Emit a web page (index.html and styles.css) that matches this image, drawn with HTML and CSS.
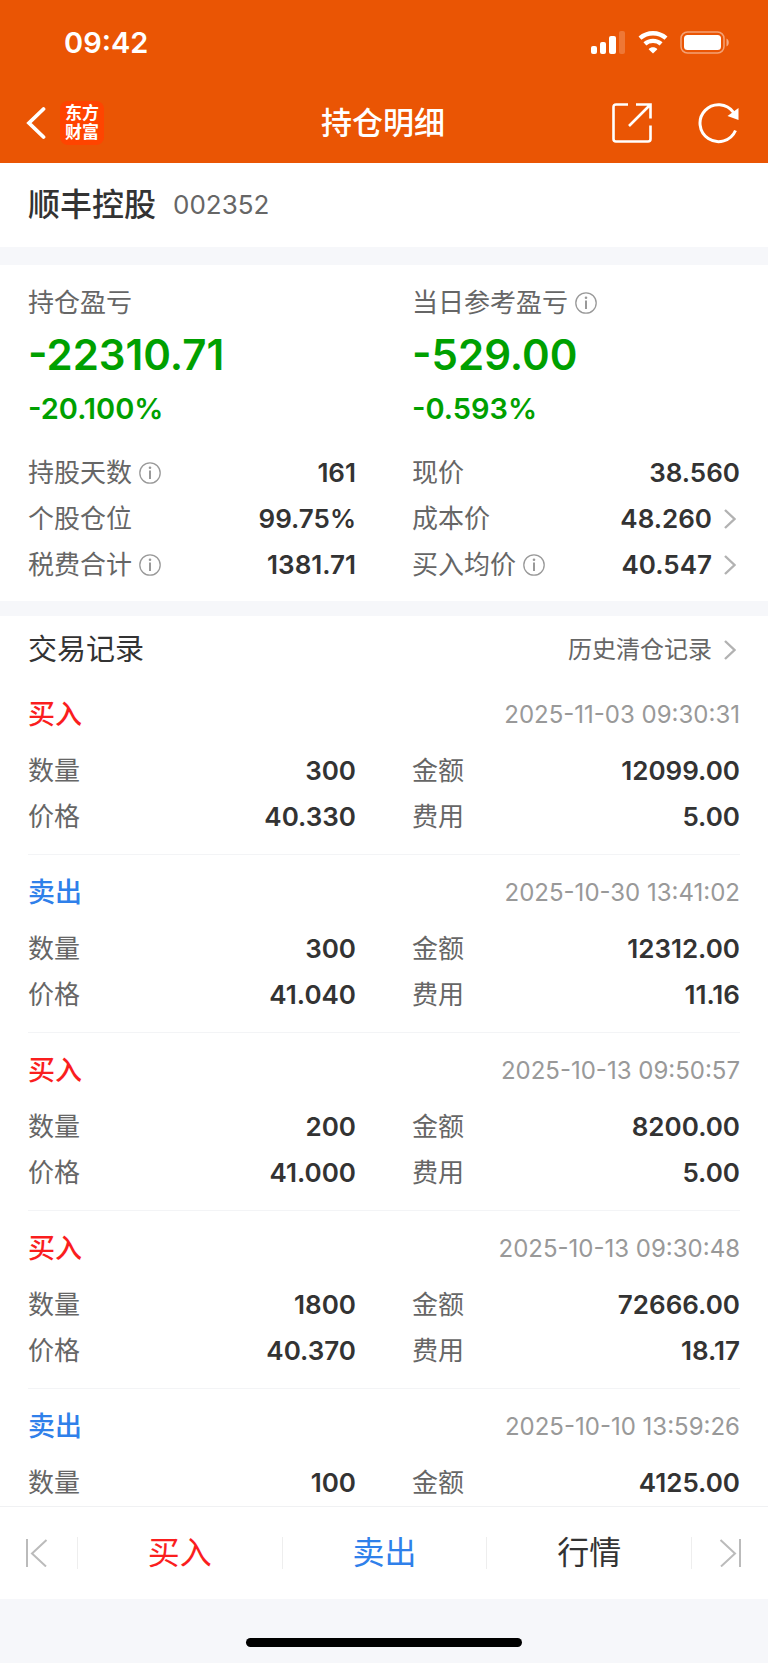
FILE: index.html
```html
<!DOCTYPE html>
<html lang="zh-CN">
<head>
    <meta charset="UTF-8">
    <meta name="viewport" content="width=device-width, initial-scale=1.0">
    <title>持仓明细</title>
    <link rel="stylesheet" href="styles.css">
</head>
<body>
    <svg class="icon-defs" aria-hidden="true">
        <symbol id="icon-info" viewBox="0 0 22 22">
            <circle cx="11" cy="11" r="10.2" fill="none" stroke="currentColor" stroke-width="1.3"/>
            <circle cx="11" cy="5.8" r="1.3" fill="currentColor"/>
            <path d="M11 8.6V17" stroke="currentColor" stroke-width="2"/>
        </symbol>
        <symbol id="icon-arrow" viewBox="0 0 12 20">
            <path d="M1 1l9.5 9L1 19" fill="none" stroke="currentColor" stroke-width="2.4"/>
        </symbol>
    </svg>

    <div class="app">
        <header class="header">
            <!-- 状态栏 -->
            <div class="status-bar">
                <span class="status-time">09:42</span>
                <div class="status-icons">
                    <svg width="35" height="23" viewBox="0 0 35 23" fill="#fff">
                        <rect x="0" y="15" width="6" height="8" rx="2"/>
                        <rect x="9" y="11" width="6" height="12" rx="2"/>
                        <rect x="18" y="5" width="7" height="18" rx="2"/>
                        <rect x="28" y="0" width="6" height="23" rx="2" opacity="0.2"/>
                    </svg>
                    <svg width="30" height="23" viewBox="0 0 30 23" fill="none" stroke="#fff" stroke-width="4.4">
                        <path d="M2 7.2C9.5 0.6 20.5 0.6 28 7.2"/>
                        <path d="M6.9 12.9C11.5 8.9 18.5 8.9 23.1 12.9"/>
                        <path d="M15 22.6L10.6 18.2C13 15.7 17 15.7 19.4 18.2Z" fill="#fff" stroke="none"/>
                    </svg>
                    <svg width="50" height="23" viewBox="0 0 50 23" fill="#fff">
                        <rect x="1" y="1" width="43" height="21" rx="6.5" fill="none" stroke="#fff" stroke-width="1.5" opacity="0.45"/>
                        <rect x="4" y="4" width="37" height="15" rx="3.5"/>
                        <path d="M46.5 7.5C49.5 8.8 49.5 14.2 46.5 15.5Z" opacity="0.5"/>
                    </svg>
                </div>
            </div>

            <!-- 导航栏 -->
            <nav class="nav-bar">
                <div class="nav-left">
                    <button class="icon-btn" aria-label="返回">
                        <svg width="20" height="34" viewBox="0 0 20 34" fill="none" stroke="#fff" stroke-width="3.8" stroke-linecap="round">
                            <path d="M17.5 3L3 17L17.5 31"/>
                        </svg>
                    </button>
                    <a href="#" class="logo">东方<br>财富</a>
                </div>
                <h1 class="nav-title">持仓明细</h1>
                <div class="nav-right">
                    <button class="icon-btn" aria-label="分享">
                        <svg width="40" height="40" viewBox="0 0 40 40" fill="none" stroke="#fff" stroke-width="2.6">
                            <path d="M16 1.5H4Q1.5 1.5 1.5 4V36Q1.5 38.5 4 38.5H36Q38.5 38.5 38.5 36V22.5"/>
                            <path d="M24 1.5H38.5V15.5M38 2L17 23"/>
                        </svg>
                    </button>
                    <button class="icon-btn" aria-label="刷新">
                        <svg width="42" height="42" viewBox="0 0 42 42" fill="none" stroke="#fff" stroke-width="3">
                            <path d="M37.5 28.5A18.5 18.5 0 1 1 35.5 10.3"/>
                            <path d="M40.5 6V18L29.5 14Z" fill="#fff" stroke="none"/>
                        </svg>
                    </button>
                </div>
            </nav>
        </header>

        <main class="content">
            <section class="stock">
                <h2 class="stock-name">顺丰控股</h2>
                <span class="stock-code">002352</span>
            </section>

            <!-- 盈亏汇总 -->
            <section class="summary columns">
                <div class="summary-col">
                    <div class="label profit-label">持仓盈亏</div>
                    <div class="profit">-22310.71</div>
                    <div class="profit-rate">-20.100%</div>
                    <dl class="rows">
                        <div class="row">
                            <dt class="label">持股天数<button class="icon-btn info" aria-label="持股天数说明"><svg width="22" height="22"><use href="#icon-info"/></svg></button></dt>
                            <dd>161</dd>
                        </div>
                        <div class="row">
                            <dt class="label">个股仓位</dt>
                            <dd>99.75%</dd>
                        </div>
                        <div class="row">
                            <dt class="label">税费合计<button class="icon-btn info" aria-label="税费合计说明"><svg width="22" height="22"><use href="#icon-info"/></svg></button></dt>
                            <dd>1381.71</dd>
                        </div>
                    </dl>
                </div>
                <div class="summary-col">
                    <div class="label profit-label">当日参考盈亏<button class="icon-btn info" aria-label="当日参考盈亏说明"><svg width="22" height="22"><use href="#icon-info"/></svg></button></div>
                    <div class="profit">-529.00</div>
                    <div class="profit-rate">-0.593%</div>
                    <dl class="rows">
                        <div class="row">
                            <dt class="label">现价</dt>
                            <dd>38.560</dd>
                        </div>
                        <div class="row">
                            <dt class="label">成本价</dt>
                            <dd><a href="#" class="more">48.260<svg width="12" height="20"><use href="#icon-arrow"/></svg></a></dd>
                        </div>
                        <div class="row">
                            <dt class="label">买入均价<button class="icon-btn info" aria-label="买入均价说明"><svg width="22" height="22"><use href="#icon-info"/></svg></button></dt>
                            <dd><a href="#" class="more">40.547<svg width="12" height="20"><use href="#icon-arrow"/></svg></a></dd>
                        </div>
                    </dl>
                </div>
            </section>

            <!-- 交易记录 -->
            <section class="records">
                <div class="records-head">
                    <h2 class="records-title">交易记录</h2>
                    <a href="#" class="more history">历史清仓记录<svg width="12" height="20"><use href="#icon-arrow"/></svg></a>
                </div>

                <article class="record">
                    <div class="record-head">
                        <h3 class="buy">买入</h3>
                        <time>2025-11-03 09:30:31</time>
                    </div>
                    <dl class="columns">
                        <div class="row"><dt class="label">数量</dt><dd>300</dd></div>
                        <div class="row"><dt class="label">金额</dt><dd>12099.00</dd></div>
                        <div class="row"><dt class="label">价格</dt><dd>40.330</dd></div>
                        <div class="row"><dt class="label">费用</dt><dd>5.00</dd></div>
                    </dl>
                </article>

                <article class="record">
                    <div class="record-head">
                        <h3 class="sell">卖出</h3>
                        <time>2025-10-30 13:41:02</time>
                    </div>
                    <dl class="columns">
                        <div class="row"><dt class="label">数量</dt><dd>300</dd></div>
                        <div class="row"><dt class="label">金额</dt><dd>12312.00</dd></div>
                        <div class="row"><dt class="label">价格</dt><dd>41.040</dd></div>
                        <div class="row"><dt class="label">费用</dt><dd>11.16</dd></div>
                    </dl>
                </article>

                <article class="record">
                    <div class="record-head">
                        <h3 class="buy">买入</h3>
                        <time>2025-10-13 09:50:57</time>
                    </div>
                    <dl class="columns">
                        <div class="row"><dt class="label">数量</dt><dd>200</dd></div>
                        <div class="row"><dt class="label">金额</dt><dd>8200.00</dd></div>
                        <div class="row"><dt class="label">价格</dt><dd>41.000</dd></div>
                        <div class="row"><dt class="label">费用</dt><dd>5.00</dd></div>
                    </dl>
                </article>

                <article class="record">
                    <div class="record-head">
                        <h3 class="buy">买入</h3>
                        <time>2025-10-13 09:30:48</time>
                    </div>
                    <dl class="columns">
                        <div class="row"><dt class="label">数量</dt><dd>1800</dd></div>
                        <div class="row"><dt class="label">金额</dt><dd>72666.00</dd></div>
                        <div class="row"><dt class="label">价格</dt><dd>40.370</dd></div>
                        <div class="row"><dt class="label">费用</dt><dd>18.17</dd></div>
                    </dl>
                </article>

                <article class="record">
                    <div class="record-head">
                        <h3 class="sell">卖出</h3>
                        <time>2025-10-10 13:59:26</time>
                    </div>
                    <dl class="columns">
                        <div class="row"><dt class="label">数量</dt><dd>100</dd></div>
                        <div class="row"><dt class="label">金额</dt><dd>4125.00</dd></div>
                    </dl>
                </article>
            </section>
        </main>

        <!-- 底部操作栏 -->
        <footer class="footer">
            <div class="action-bar">
                <button class="action action-side" aria-label="上一只">
                    <svg width="22" height="28" viewBox="0 0 22 28" fill="none" stroke="#bbb" stroke-width="2">
                        <path d="M1 0V28M20.5 1L6 14.5L20 27.5"/>
                    </svg>
                </button>
                <button class="action buy">买入</button>
                <button class="action sell">卖出</button>
                <button class="action">行情</button>
                <button class="action action-side" aria-label="下一只">
                    <svg width="22" height="28" viewBox="0 0 22 28" fill="none" stroke="#bbb" stroke-width="2">
                        <path d="M21 0V28M1.5 1L16 14.5L2 27.5"/>
                    </svg>
                </button>
            </div>
            <div class="home-area"><div class="home-indicator"></div></div>
        </footer>
    </div>
</body>
</html>
```
FILE: styles.css
```css
* {
    margin: 0;
    padding: 0;
    box-sizing: border-box;
}

body {
    font-family: Inter, 'Noto Sans CJK SC', sans-serif;
    font-size: 26px;
    color: #333;
    background: #f6f7fa;
}

button {
    font: inherit;
    color: inherit;
    background: none;
    border: none;
    cursor: pointer;
}

a {
    color: inherit;
    text-decoration: none;
}

svg {
    display: block;
    flex: none;
}

.icon-defs {
    display: none;
}

.icon-btn {
    display: flex;
}

.app {
    display: flex;
    flex-direction: column;
    height: 100vh;
}

/* 顶部 */
.header {
    background: #ea5504;
    color: #fff;
}

.status-bar {
    display: flex;
    align-items: center;
    justify-content: space-between;
    height: 84px;
    padding: 0 38px 0 64px;
}

.status-time {
    font-size: 29px;
    font-weight: 600;
}

.status-icons {
    display: flex;
    gap: 12px;
}

.nav-bar {
    display: grid;
    grid-template-columns: 1fr auto 1fr;
    align-items: center;
    height: 79px;
    padding: 0 28px 2px 26px;
}

.nav-left,
.nav-right {
    display: flex;
    align-items: center;
}

.nav-left {
    gap: 14px;
}

.nav-right {
    justify-content: flex-end;
    gap: 46px;
}

.logo {
    width: 44px;
    height: 44px;
    padding: 3px 0;
    border-radius: 8px;
    background: #ff4400;
    font-size: 17px;
    font-weight: 700;
    line-height: 19px;
    text-align: center;
}

.nav-title {
    font-size: 31px;
    font-weight: 500;
    line-height: 40px;
}

/* 内容区 */
.content {
    flex: 1;
    min-height: 0;
    overflow-y: auto;
    scrollbar-width: none;
    background: #fff;
}

.stock {
    display: flex;
    align-items: center;
    gap: 17px;
    height: 84px;
    padding: 0 28px;
    line-height: 40px;
}

.stock-name {
    font-size: 32px;
    font-weight: 500;
}

.stock-code {
    color: #666;
}

.columns {
    display: grid;
    grid-template-columns: 1fr 1fr;
    column-gap: 56px;
}

.summary {
    padding: 16px 28px 13px;
    border-top: 18px solid #f6f7fa;
}

.label {
    display: flex;
    align-items: center;
    color: #666;
}

.info {
    margin-left: 7px;
    color: #999;
}

.profit-label {
    line-height: 44px;
}

.profit {
    font-size: 42px;
    font-weight: 600;
    line-height: 60px;
    color: #00a000;
}

.profit-rate {
    font-size: 29px;
    font-weight: 600;
    line-height: 48px;
    color: #00a000;
}

.rows {
    margin-top: 17px;
}

.row {
    display: flex;
    justify-content: space-between;
    line-height: 46px;
}

.row dd {
    font-weight: 600;
}

.more {
    display: flex;
    align-items: center;
    gap: 12px;
    padding-right: 4px;
}

.more svg {
    color: #b2b2b2;
}

/* 交易记录 */
.records {
    padding: 0 28px;
    border-top: 15px solid #f6f7fa;
}

.records-head {
    display: flex;
    justify-content: space-between;
    padding-top: 6px;
    line-height: 55px;
}

.records-title {
    font-size: 29px;
    font-weight: 400;
}

.history {
    font-size: 24px;
    color: #666;
}

.record {
    padding: 5px 0 14px;
    border-bottom: 1px solid #f3f4f6;
}

.record:last-child {
    padding-bottom: 0;
    border-bottom: none;
}

.record-head {
    display: flex;
    justify-content: space-between;
    line-height: 66px;
}

.record-head h3 {
    font-size: 27px;
    font-weight: 500;
}

.record-head time {
    font-size: 24px;
    color: #999;
}

.buy {
    color: #fa1e1e;
}

.sell {
    color: #2f80ea;
}

/* 底部 */
.action-bar {
    display: flex;
    align-items: center;
    height: 93px;
    border-top: 1px solid #f0f1f3;
    background: #fff;
}

.action {
    display: flex;
    align-items: center;
    justify-content: center;
    flex: 1;
    height: 32px;
    font-size: 32px;
    line-height: 32px;
}

.action + .action {
    border-left: 1px solid #eee;
}

.action-side {
    flex: none;
    width: 77px;
}

.action-side:first-child {
    padding-right: 4px;
}

.home-area {
    display: flex;
    justify-content: center;
    align-items: flex-end;
    height: 64px;
    padding-bottom: 16px;
}

.home-indicator {
    width: 36%;
    height: 9px;
    border-radius: 5px;
    background: #000;
}
```
